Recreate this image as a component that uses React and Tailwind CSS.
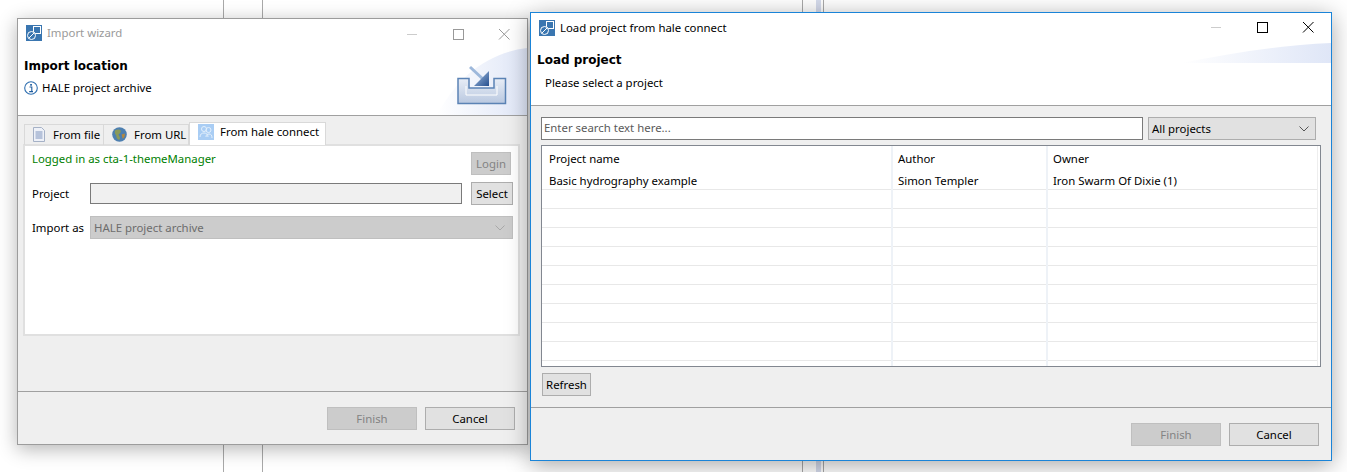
function AppIcon() {
  return (
    <svg width="16" height="16" viewBox="0 0 16 16" className="shrink-0">
      <rect width="16" height="16" fill="#3a76b0" />
      <rect x="7.500" y="1.500" width="7" height="7" fill="#3a76b0" stroke="#fff" />
      <circle cx="5.500" cy="10.500" r="4" fill="#3a76b0" stroke="#fff" />
      <path d="M3 13 8.500 7.500" stroke="#fff" />
    </svg>
  );
}

function WinControls({ active }) {
  const c = active ? "#000" : "#999";
  return (
    <div className="flex items-center ml-auto">
      <svg width="46" height="27" viewBox="0 0 46 27"><path d="M18 14.500h10" stroke="#ccc" /></svg>
      <svg width="46" height="27" viewBox="0 0 46 27"><rect x="18.500" y="9.500" width="10" height="10" fill="none" stroke={c} /></svg>
      <svg width="46" height="27" viewBox="0 0 46 27"><path d="M18 9l10.500 10.500M28.500 9 18 19.500" stroke={c} /></svg>
    </div>
  );
}

function Btn({ children, disabled, className = "" }) {
  return (
    <div className={`flex items-center justify-center h-[23px] border ${disabled ? "bg-[#cccccc] border-[#bfbfbf] text-[#838383]" : "bg-[#e1e1e1] border-[#adadad] text-black"} ${className}`}>
      {children}
    </div>
  );
}

function Chevron({ color }) {
  return (
    <svg width="10" height="6" viewBox="0 0 10 6"><path d="M.5.5 5 5 9.500.5" fill="none" stroke={color} /></svg>
  );
}

function Swoosh({ id, w, h, d }) {
  return (
    <svg width={w} height={h} viewBox={`0 0 ${w} ${h}`} className="absolute right-0 top-0">
      <defs>
        <linearGradient id={id} x1="0" x2="1" y1="0" y2="0">
          <stop offset="0" stopColor="#fff" />
          <stop offset="1" stopColor="#dfe6f7" />
        </linearGradient>
      </defs>
      <path d={d} fill={`url(#${id})`} />
    </svg>
  );
}

function ImportGlyph() {
  return (
    <svg width="52" height="40" viewBox="0 0 52 40" className="absolute right-[18px] top-[46px]">
      <defs>
        <linearGradient id="tray" x1="0" x2="0" y1="0" y2="1">
          <stop offset="0" stopColor="#e8edf6" />
          <stop offset="1" stopColor="#b9c8e0" />
        </linearGradient>
        <linearGradient id="arrow" x1="0" x2="1" y1="0" y2="1">
          <stop offset="0" stopColor="#a9c3e4" />
          <stop offset="1" stopColor="#254f8f" />
        </linearGradient>
      </defs>
      <path d="M1 13.500h11v9.500h25v-9.500h11.500v25h-47.500z" fill="url(#tray)" stroke="#5b83b5" strokeWidth="1.500" />
      <path d="M9 21v9h31v-9" fill="none" stroke="#fff" strokeWidth="1" />
      <path d="M13 2l14 13" stroke="#9db8db" strokeWidth="3" />
      <path d="M32 6v15H17z" fill="url(#arrow)" />
    </svg>
  );
}

function TabIconFile() {
  return (
    <svg width="12" height="15" viewBox="0 0 12 15">
      <path d="M.5.500h8l3 3v11H.500z" fill="#eef1f8" stroke="#a5b1c6" />
      <path d="M2.500 5h7M2.500 7h7M2.500 9h7M2.500 11h7" stroke="#7f94bd" />
    </svg>
  );
}

function TabIconGlobe() {
  return (
    <svg width="15" height="15" viewBox="0 0 14 14">
      <circle cx="7" cy="7" r="6.800" fill="#4d7fb0" />
      <path d="M3 3c2-1 4-1 5 0 1 2-1 3-2 4 1 2 2 3 1 5-2 0-3-2-3-4C3 7 2 5 3 3z" fill="#8a9a5a" />
      <path d="M9 7l3-1c0 2 0 4-2 5z" fill="#b5893f" />
    </svg>
  );
}

function TabIconUsers() {
  return (
    <svg width="16" height="16" viewBox="0 0 16 16">
      <rect width="16" height="16" fill="#a9cdf4" />
      <circle cx="6" cy="5" r="2.500" fill="none" stroke="#e4f0fc" />
      <circle cx="10.500" cy="6" r="2.500" fill="none" stroke="#e4f0fc" />
      <path d="M2 13c0-3 2-4 4-4s4 1 4 4M8 13c0-2 1-3 3-3s3 1 3 4" fill="none" stroke="#e4f0fc" />
    </svg>
  );
}

function InfoIcon() {
  return (
    <svg width="14" height="14" viewBox="0 0 14 14" className="shrink-0">
      <circle cx="7" cy="7" r="6.300" fill="#fff" stroke="#2f6fb0" strokeWidth="1.100" />
      <rect x="6.200" y="3" width="1.700" height="1.700" fill="#1c5a9c" />
      <path d="M5.500 6h2.300v4.500h1M5.200 10.600h3.800" fill="none" stroke="#1c5a9c" strokeWidth="1.100" />
    </svg>
  );
}

function ImportWindow() {
  return (
    <div className="absolute left-[17px] top-[18px] w-[511px] h-[427px] flex flex-col bg-[#efefef] border border-[#9c9c9c] shadow-[0_4px_18px_rgba(0,0,0,0.3)]">
      <div className="relative h-[97px] shrink-0 bg-white border-b border-[#a0a0a0] overflow-hidden">
        <Swoosh id="sw1" w={90} h={96} d="M0 96 C 20 58, 50 34, 90 29 V 96 Z" />
        <ImportGlyph />
        <div className="relative flex items-center h-[27px] pl-[8px] pt-[1px] text-[#9a9a9a]">
          <AppIcon />
          <span className="ml-[5px]">Import wizard</span>
          <WinControls />
        </div>
        <div className="relative pl-[6px] mt-[10px] font-['DejaVu_Sans'] font-bold text-[12px] leading-[20px] text-black">Import location</div>
        <div className="relative flex items-center pl-[6px] mt-[4px] gap-[4px] text-black">
          <InfoIcon />
          <span>HALE project archive</span>
        </div>
      </div>
      <div className="flex-1 px-[5px] pt-[7px] flex flex-col">
        <div className="flex items-end h-[22px] ml-[1px] -mb-px relative z-10">
          <div className="flex items-center h-[21px] w-[80px] pl-[8px] pb-[1px] gap-[8px] border border-[#d9d9d9] border-b-0">
            <TabIconFile /><span>From file</span>
          </div>
          <div className="flex items-center h-[21px] w-[85px] pl-[8px] pb-[1px] gap-[7px] border-r border-t border-[#d9d9d9]">
            <TabIconGlobe /><span>From URL</span>
          </div>
          <div className="flex items-start h-[23px] w-[137px] pl-[8px] pt-[1px] gap-[6px] bg-white border border-[#d9d9d9] border-b-0">
            <TabIconUsers /><span>From hale connect</span>
          </div>
        </div>
        <div className="h-[192px] w-[497px] bg-white border-2 border-[#e0e0e0] pl-[7px] pr-[5px] pt-[6px] flex flex-col">
          <div className="flex items-start h-[31px]">
            <span className="text-[#008000] mt-[-1px]">Logged in as cta-1-themeManager</span>
            <Btn disabled className="w-[40px] ml-auto mr-[2px]">Login</Btn>
          </div>
          <div className="flex items-center h-[23px] mt-[-1px]">
            <span className="w-[58px]">Project</span>
            <div className="w-[372px] h-[21px] bg-[#f0f0f0] border border-[#7a7a7a]" />
            <Btn className="w-[42px] ml-[9px]">Select</Btn>
          </div>
          <div className="flex items-center h-[23px] mt-[11px]">
            <span className="w-[58px]">Import as</span>
            <div className="flex items-center justify-between w-[423px] h-[23px] bg-[#cccccc] border border-[#bfbfbf] pl-[3px] pr-[7px] text-[#6d6d6d]">
              <span>HALE project archive</span>
              <Chevron color="#a8a8a8" />
            </div>
          </div>
        </div>
      </div>
      <div className="h-[53px] shrink-0 border-t border-[#a0a0a0] flex justify-end gap-[8px] pt-[15px] pr-[12px]">
        <Btn disabled className="w-[90px]">Finish</Btn>
        <Btn className="w-[90px]">Cancel</Btn>
      </div>
    </div>
  );
}

const rows = Array.from({ length: 10 });

function Col({ w, head, cell, border, first }) {
  const pad = first ? "pl-[7px]" : "pl-[5px]";
  return (
    <div className={`flex flex-col shrink-0 ${border ? "border-r-2 border-[#eef2f7]" : ""}`} style={{ width: w }}>
      <div className={`h-[25px] flex items-center ${pad}`}>{head}</div>
      {rows.map((_, i) => (
        <div key={i} className={`h-[19px] shrink-0 pt-[2px] flex items-center border-b border-[#e8e8e8] ${pad}`}>
          {i === 0 ? cell : null}
        </div>
      ))}
    </div>
  );
}

function LoadWindow() {
  return (
    <div className="absolute left-[530px] top-[12px] w-[802px] h-[449px] flex flex-col bg-[#efefef] border border-[#1a84d8] shadow-[0_4px_22px_rgba(0,0,0,0.35)]">
      <div className="relative h-[93px] shrink-0 bg-white border-b border-[#a0a0a0] overflow-hidden">
        <Swoosh id="sw2" w={150} h={50} d="M0 50 C 50 40, 100 32, 150 30 V 50 Z" />
        <div className="relative flex items-center h-[30px] pl-[8px] text-black">
          <AppIcon />
          <span className="ml-[5px]">Load project from hale connect</span>
          <div className="ml-auto mt-[-3px]"><WinControls active /></div>
        </div>
        <div className="relative pl-[6px] mt-[7px] font-['DejaVu_Sans'] font-bold text-[12px] leading-[20px]">Load project</div>
        <div className="relative pl-[14px] mt-[5px]">Please select a project</div>
      </div>
      <div className="flex-1 px-[10px] pt-[11px] flex flex-col">
        <div className="flex items-center gap-[5px] h-[23px]">
          <div className="w-[602px] h-[23px] bg-white border border-[#7a7a7a] pl-[2px] pb-[1px] flex items-center text-[#5a5a5a]">Enter search text here...</div>
          <div className="w-[168px] h-[23px] bg-[#e1e1e1] border border-[#adadad] pl-[3px] pr-[6px] flex items-center justify-between">
            <span>All projects</span>
            <Chevron color="#555" />
          </div>
        </div>
        <div className="mt-[5px] w-[780px] h-[222px] bg-white border border-[#828790] overflow-hidden flex">
          <Col w={351} head="Project name" cell="Basic hydrography example" border first />
          <Col w={155} head="Author" cell="Simon Templer" border />
          <Col w={269} head="Owner" cell="Iron Swarm Of Dixie (1)" />
          <div className="flex-1 border-l border-[#eeeeee]" />
        </div>
        <Btn className="w-[49px] mt-[6px] ml-[1px]">Refresh</Btn>
      </div>
      <div className="h-[53px] shrink-0 border-t border-[#a0a0a0] flex justify-end gap-[8px] pt-[15px] pr-[12px]">
        <Btn disabled className="w-[90px]">Finish</Btn>
        <Btn className="w-[90px]">Cancel</Btn>
      </div>
    </div>
  );
}

export default function App() {
  return (
    <div className="relative w-[1347px] h-[472px] overflow-hidden bg-white font-['Noto_Sans','Open_Sans',sans-serif] text-[11.400px] leading-[16px] text-black">
      <div className="absolute left-[223px] top-0 h-full w-px bg-[#a9a9a9]" />
      <div className="absolute left-[262px] top-0 h-full w-px bg-[#a9a9a9]" />
      <div className="absolute left-[802px] top-0 h-full w-px bg-[#a9a9a9]" />
      <div className="absolute left-[816px] top-0 h-full w-[5px] bg-[#d5dbec]" />
      <div className="absolute left-[823px] top-0 h-full w-px bg-[#a9a9a9]" />
      <ImportWindow />
      <LoadWindow />
    </div>
  );
}
